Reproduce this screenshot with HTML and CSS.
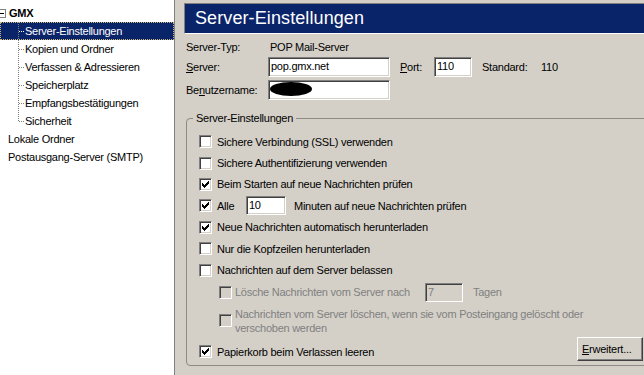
FILE: index.html
```html
<!DOCTYPE html>
<html lang="de">
<head>
    <meta charset="UTF-8">
    <title>Konten-Einstellungen</title>
    <link rel="stylesheet" href="styles.css">
</head>
<body>
    <div class="window">
        <div class="tree">
            <div class="node root"><span class="toggle"></span><b>GMX</b></div>
            <div class="children">
                <div class="node child selected">Server-Einstellungen</div>
                <div class="node child">Kopien und Ordner</div>
                <div class="node child">Verfassen &amp; Adressieren</div>
                <div class="node child">Speicherplatz</div>
                <div class="node child">Empfangsbestätigungen</div>
                <div class="node child">Sicherheit</div>
            </div>
            <div class="node">Lokale Ordner</div>
            <div class="node">Postausgang-Server (SMTP)</div>
        </div>

        <div class="panel">
            <div class="banner">Server-Einstellungen</div>

            <div class="server-form">
                <div class="form-row info">
                    <span class="label">Server-Typ:</span>
                    <span class="value">POP Mail-Server</span>
                </div>
                <div class="form-row">
                    <span class="label"><u>S</u>erver:</span>
                    <div class="field host">pop.gmx.net</div>
                    <span class="port-label"><u>P</u>ort:</span>
                    <div class="field port">110</div>
                    <span class="std-label">Standard:</span>
                    <span>110</span>
                </div>
                <div class="form-row">
                    <span class="label">Be<u>n</u>utzername:</span>
                    <div class="field host"><span class="blob"></span></div>
                </div>
            </div>

            <fieldset class="group">
                <legend>Server-Einstellungen</legend>

                <div class="opt"><span class="check"></span>Sichere Verbindung (SSL) verwenden</div>
                <div class="opt"><span class="check"></span>Sichere Authentifizierung verwenden</div>
                <div class="opt"><span class="check checked"><svg width="7" height="7" viewBox="0 0 7 7"><path d="M0.5 2v3M1.5 3v3M2.5 4v3M3.5 3v3M4.5 2v3M5.5 1v3M6.5 0v3" stroke="#000" stroke-width="1"/></svg></span>Beim Starten auf neue Nachrichten prüfen</div>
                <div class="opt"><span class="check checked"><svg width="7" height="7" viewBox="0 0 7 7"><path d="M0.5 2v3M1.5 3v3M2.5 4v3M3.5 3v3M4.5 2v3M5.5 1v3M6.5 0v3" stroke="#000" stroke-width="1"/></svg></span><span class="alle">Alle</span><div class="field minutes">10</div>Minuten auf neue Nachrichten prüfen</div>
                <div class="opt"><span class="check checked"><svg width="7" height="7" viewBox="0 0 7 7"><path d="M0.5 2v3M1.5 3v3M2.5 4v3M3.5 3v3M4.5 2v3M5.5 1v3M6.5 0v3" stroke="#000" stroke-width="1"/></svg></span>Neue Nachrichten automatisch herunterladen</div>
                <div class="opt"><span class="check"></span>Nur die Kopfzeilen herunterladen</div>
                <div class="opt"><span class="check"></span>Nachrichten auf dem Server belassen</div>

                <div class="opt sub disabled days-row"><span class="check"></span><span class="days-label">Lösche Nachrichten vom Server nach</span><div class="field days">7</div>Tagen</div>
                <div class="opt sub disabled multi"><span class="check"></span><span>Nachrichten vom Server löschen, wenn sie vom Posteingang gelöscht oder<br>verschoben werden</span></div>

                <div class="last-row">
                    <div class="opt"><span class="check checked"><svg width="7" height="7" viewBox="0 0 7 7"><path d="M0.5 2v3M1.5 3v3M2.5 4v3M3.5 3v3M4.5 2v3M5.5 1v3M6.5 0v3" stroke="#000" stroke-width="1"/></svg></span>Papierkorb beim Verlassen leeren</div>
                    <div class="button"><u>E</u>rweitert...</div>
                </div>
            </fieldset>
        </div>
    </div>
</body>
</html>
```

FILE: styles.css
```css
body {
    margin: 0;
    font-family: "Liberation Sans", Arial, sans-serif;
    font-size: 11px;
    letter-spacing: -0.25px;
    color: #000;
    background: #d4d0c8;
}
.window {
    display: flex;
    height: 375px;
    overflow: hidden;
}

/* Baum links */
.tree {
    width: 174px;
    flex: none;
    background: #fff;
    border-right: 1px solid #808080;
    padding-top: 4px;
    overflow: hidden;
}
.node {
    height: 18px;
    line-height: 18px;
    padding-left: 8px;
    white-space: nowrap;
}
.root {
    padding-left: 9px;
}
.toggle {
    display: inline-block;
    width: 7px;
    height: 7px;
    border: 1px solid #808080;
    margin-left: -12px;
    margin-right: 3px;
    vertical-align: -1px;
    position: relative;
    background: #fff;
}
.toggle::after {
    content: "";
    position: absolute;
    left: 1px;
    top: 3px;
    width: 5px;
    height: 1px;
    background: #000;
}
.children {
    position: relative;
}
.children::before {
    content: "";
    position: absolute;
    left: 18px;
    top: 0;
    bottom: 9px;
    width: 1px;
    background: repeating-linear-gradient(#808080 0 1px, transparent 1px 2px);
    z-index: 1;
}
.child {
    position: relative;
    padding-left: 25px;
}
.child::before {
    content: "";
    position: absolute;
    left: 19px;
    top: 9px;
    width: 6px;
    height: 1px;
    background: repeating-linear-gradient(90deg, #808080 0 1px, transparent 1px 2px);
}
.selected {
    background: #0a246a;
    color: #fff;
    outline: 1px dotted #c9b877;
    outline-offset: -1px;
}
.selected::before {
    background: repeating-linear-gradient(90deg, #fff 0 1px, transparent 1px 2px);
}

/* rechte Seite */
.panel {
    flex: 1;
    min-width: 0;
    padding-left: 9px;
}
.banner {
    margin-top: 3px;
    height: 29px;
    line-height: 29px;
    padding-left: 10px;
    background: #0a246a;
    color: #fff;
    font-size: 18px;
    letter-spacing: 0.1px;
    border-top: 1px solid #808080;
    border-left: 1px solid #808080;
    border-bottom: 1px solid #fff;
    white-space: nowrap;
}
.server-form {
    margin-top: 4px;
    margin-left: 2px;
}
.form-row {
    display: flex;
    align-items: center;
    height: 20px;
    margin-bottom: 3px;
    white-space: nowrap;
}
.form-row.info {
    height: 18px;
    margin-bottom: 1px;
}
.label {
    width: 82px;
    flex: none;
}
.value {
    padding-left: 2px;
}
.field {
    box-sizing: border-box;
    height: 20px;
    line-height: 16px;
    padding-left: 2px;
    background: #fff;
    border-top: 1px solid #808080;
    border-left: 1px solid #808080;
    border-bottom: 1px solid #fff;
    border-right: 1px solid #fff;
    box-shadow: inset 1px 1px 0 #404040, inset -1px -1px 0 #d4d0c8;
    white-space: nowrap;
    overflow: hidden;
}
.field.host {
    width: 122px;
}
.field.port {
    width: 38px;
}
.port-label {
    margin-left: 10px;
    width: 34px;
}
.std-label {
    margin-left: 10px;
    width: 59px;
}
.blob {
    display: inline-block;
    width: 42px;
    height: 14px;
    margin-left: -1px;
    margin-top: 1px;
    background: #000;
    border-radius: 50%;
    vertical-align: top;
}

/* Gruppe */
.group {
    margin: 11px -12px 0 2px;
    padding: 6px 12px 4px 12px;
    border: 1px solid #8d8b86;
    border-radius: 4px;
}
.group legend {
    margin-left: -6px;
    padding: 0 3px;
    line-height: 14px;
}
.opt {
    display: flex;
    align-items: center;
    height: 21.4px;
    white-space: nowrap;
}
.check {
    box-sizing: border-box;
    width: 13px;
    height: 13px;
    flex: none;
    margin-right: 5px;
    padding: 2px;
    background: #fff;
    border-top: 1px solid #808080;
    border-left: 1px solid #808080;
    border-bottom: 1px solid #fff;
    border-right: 1px solid #fff;
    box-shadow: inset 1px 1px 0 #404040, inset -1px -1px 0 #d4d0c8;
}
.check svg {
    display: block;
}
.alle {
    width: 29px;
}
.field.minutes {
    width: 40px;
    height: 19px;
    margin-right: 8px;
}
.sub {
    padding-left: 20px;
}
.sub .check {
    margin-right: 3px;
}
.disabled {
    color: #808080;
}
.disabled .check,
.disabled .field {
    background: #d4d0c8;
}
.days-row {
    height: 23px;
}
.days-label {
    width: 190px;
}
.field.days {
    width: 38px;
    height: 19px;
    margin-right: 10px;
    color: #808080;
}
.multi {
    height: 28px;
    padding-top: 3px;
    line-height: 14px;
}
.last-row {
    display: flex;
    justify-content: space-between;
    margin-top: 2px;
    height: 24px;
}
.last-row .opt {
    align-self: flex-end;
    height: 18px;
}
.button {
    box-sizing: border-box;
    width: 66px;
    height: 24px;
    line-height: 22px;
    padding-left: 4px;
    background: #d4d0c8;
    border-top: 1px solid #fff;
    border-left: 1px solid #fff;
    border-bottom: 1px solid #404040;
    border-right: 1px solid #404040;
    box-shadow: inset -1px -1px 0 #808080;
}
```
